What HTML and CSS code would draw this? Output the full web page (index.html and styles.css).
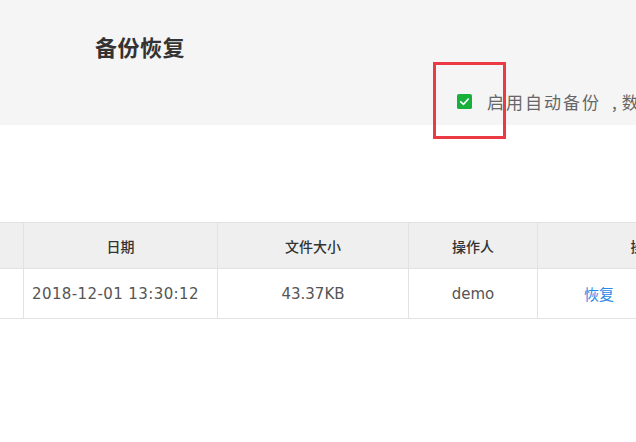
FILE: index.html
```html
<!DOCTYPE html>
<html lang="zh">
<head>
<meta charset="utf-8">
<link rel="stylesheet" href="styles.css">
</head>
<body>
<div class="page">
  <header class="top">
    <h1 class="title">备份恢复</h1>
    <div class="auto">
      <span class="check">
        <svg viewBox="0 0 16 16" width="15" height="15"><rect x="0" y="0" width="16" height="16" rx="2" fill="#17b03b"/><path d="M4 8.3 L7 11 L12 5.4" fill="none" stroke="#fff" stroke-width="1.8" stroke-linecap="round" stroke-linejoin="round"/></svg>
      </span>
      <span class="auto-text">启用自动备份<span class="comma">,</span>数据每天自动备份一次</span>
      <span class="mark"></span>
    </div>
  </header>
  <div class="table-wrap">
    <table class="grid">
      <colgroup>
        <col class="c1"><col class="c2"><col class="c3"><col class="c4"><col class="c5">
      </colgroup>
      <thead>
        <tr><th>序号</th><th>日期</th><th>文件大小</th><th>操作人</th><th class="op">操作</th></tr>
      </thead>
      <tbody>
        <tr><td>1</td><td class="num date">2018-12-01 13:30:12</td><td class="num">43.37KB</td><td class="num">demo</td><td class="act"><a href="#">恢复</a></td></tr>
      </tbody>
    </table>
  </div>
</div>
</body>
</html>
```
FILE: styles.css
```css
html, body {
  margin: 0;
  padding: 0;
  background: #fff;
  font-family: "Noto Sans CJK SC", "Noto Sans", sans-serif;
  color: #555;
}
.page {
  width: 636px;
  height: 442px;
  overflow: hidden;
}
.top {
  height: 125px;
  background: #f5f5f5;
  box-sizing: border-box;
  padding: 33px 0 0 95px;
  position: relative;
}
.title {
  margin: 0;
  font-size: 22px;
  line-height: 26px;
  font-weight: bold;
  color: #333;
  letter-spacing: 0.5px;
}
.auto {
  display: flex;
  align-items: center;
  margin: 33px 0 0 362px;
  white-space: nowrap;
  position: relative;
  height: 18px;
}
.check {
  display: flex;
  width: 15px;
  height: 15px;
}
.auto-text {
  margin-left: 15px;
  font-size: 17px;
  letter-spacing: 2px;
  color: #666;
}
.comma {
  padding: 0 5px 0 11px;
  letter-spacing: 0;
}
.mark {
  position: absolute;
  left: -24px;
  top: -30px;
  width: 67px;
  height: 71px;
  border: 3px solid #ec3a44;
}
.table-wrap {
  margin-top: 97px;
  overflow: hidden;
}
.grid {
  border-collapse: collapse;
  table-layout: fixed;
  margin-left: -78px;
  width: 829px;
}
.c1 { width: 101px; }
.c2 { width: 194px; }
.c3 { width: 191px; }
.c4 { width: 129px; }
.c5 { width: 214px; }
.grid th, .grid td {
  border: 1px solid #e2e2e2;
  text-align: center;
  padding: 0;
  overflow: hidden;
  white-space: nowrap;
}
.grid th {
  height: 45px;
  background: #efefef;
  font-weight: 500;
  font-size: 14px;
  color: #333;
}
.grid td {
  height: 49px;
  font-size: 15px;
  color: #555;
}
.grid td.num {
  font-family: "DejaVu Sans", "Noto Sans CJK SC", sans-serif;
  font-size: 15px;
}
.grid td.date {
  letter-spacing: 0.4px;
  padding-right: 10px;
}
.grid td.act {
  text-align: left;
  padding-left: 46px;
}
.act a {
  color: #2b88e8;
  text-decoration: none;
  font-size: 15px;
}
```
